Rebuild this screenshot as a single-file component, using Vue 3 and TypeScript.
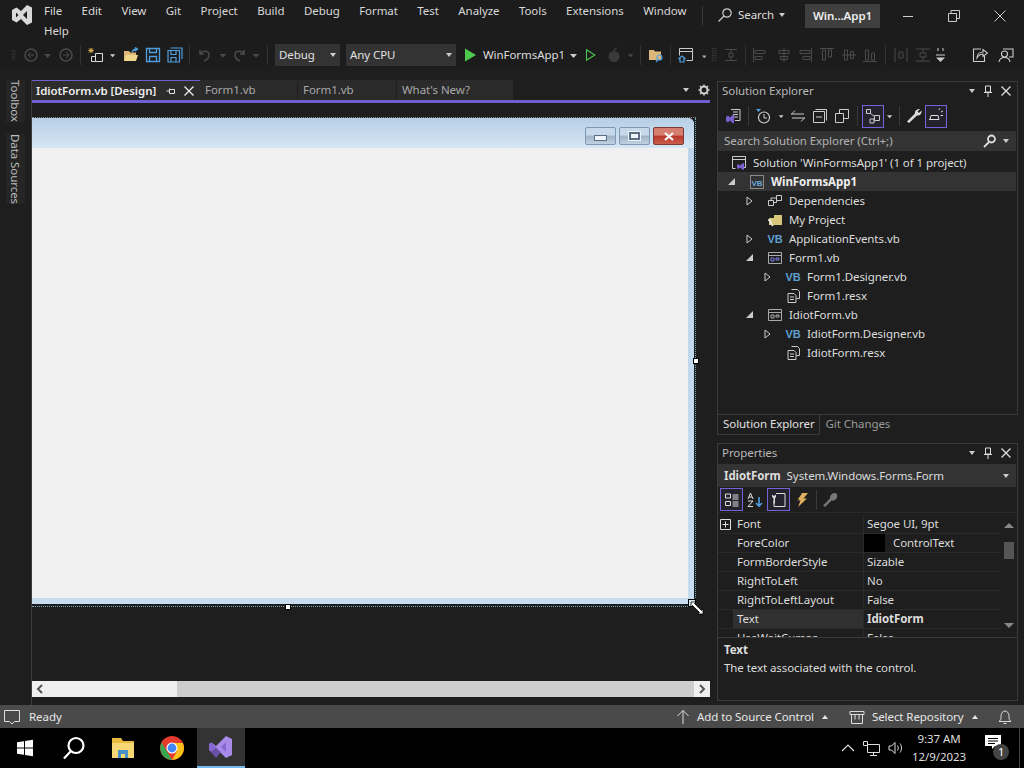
<template>
  <div class="ide">
    <header class="titlebar">
      <div class="logo">
        <svg width="24" height="24" viewBox="0 0 24 24"><path fill="#d8d8d8" d="M17 2l5 2.500v15L17 22l-6-6-4.500 3.500L2 17V7l4.500-2.500L11 8zM6 9.500v5l2.500-2.500zM17 8l-4 4 4 4z" /></svg>
      </div>
      <nav class="menu">
        <span v-for="m in menus" :key="m">{{ m }}</span>
      </nav>
      <div class="vsep"></div>
      <div class="search">
        <svg width="16" height="16" viewBox="0 0 16 16" fill="none" stroke="#ccc" stroke-width="1.2"><circle cx="10" cy="6" r="4.200" /><path d="M7 9l-5.500 5.500" /></svg>
        <span>Search</span>
        <i class="caret"></i>
      </div>
      <div class="project-name">Win...App1</div>
      <div class="win-btns">
        <svg width="12" height="12" viewBox="0 0 12 12" stroke="#ccc" fill="none"><path d="M1 6.500h10" /></svg>
        <svg width="12" height="12" viewBox="0 0 12 12" stroke="#ccc" fill="none"><path d="M.5 3.500h8v8h-8zM3 3.500V.5h8.500v8H8.500" /></svg>
        <svg width="12" height="12" viewBox="0 0 12 12" stroke="#ccc" fill="none"><path d="M.5.5l11 11M11.500.5l-11 11" /></svg>
      </div>
    </header>

    <div class="toolbar">
      <template v-for="(t, i) in toolItems" :key="i">
        <div v-if="t.combo" class="combo" :style="{ width: t.w + 'px' }"><span>{{ t.combo }}</span><i class="caret"></i></div>
        <div v-else-if="t.label" class="run-label" :style="{ width: t.w + 'px' }">{{ t.label }}</div>
        <div v-else-if="t.sep" class="tb-sep" :style="{ width: t.w + 'px' }"><b></b></div>
        <div v-else class="tb-icon" :style="{ width: t.w + 'px' }">
          <svg v-if="t.icon" width="16" height="16" viewBox="0 0 16 16" fill="none" v-html="icons[t.icon]"></svg>
        </div>
      </template>
    </div>

    <main class="main">
      <aside class="strip">
        <span>Toolbox</span>
        <span>Data Sources</span>
      </aside>

      <section class="doc">
        <div class="tabs">
          <div class="tab active">
            <span>IdiotForm.vb [Design]</span>
            <svg width="10" height="10" viewBox="0 0 10 10" fill="none" stroke="#ddd"><path d="M.5 5h3M3.500 2.500v5h5v-4h-5" /></svg>
            <svg width="10" height="10" viewBox="0 0 10 10" fill="none" stroke="#eee" stroke-width="1.300"><path d="M.5.5l9 9M9.500.5l-9 9" /></svg>
          </div>
          <div class="tab" style="width: 98px">Form1.vb</div>
          <div class="tab" style="width: 99px">Form1.vb</div>
          <div class="tab" style="width: 117px">What's New?</div>
          <div class="tab-tools">
            <i class="caret"></i>
            <svg width="12" height="12" viewBox="0 0 12 12"><circle cx="6" cy="6" r="3.500" fill="none" stroke="#ccc" stroke-width="2" /><path stroke="#ccc" stroke-width="1.500" d="M6 .5v2M6 9.500v2M.5 6h2M9.500 6h2M2 2l1.500 1.500M8.500 8.500L10 10M10 2L8.500 3.500M3.500 8.500L2 10" /></svg>
          </div>
        </div>
        <div class="canvas">
          <div class="form">
            <div class="form-title">
              <div class="cap-btn"><b class="min"></b></div>
              <div class="cap-btn"><b class="max"></b></div>
              <div class="cap-btn close">
                <svg width="12" height="9" viewBox="0 0 12 9" stroke="#fff" stroke-width="2.200"><path d="M2 1l8 7M10 1L2 8" /></svg>
              </div>
            </div>
            <div class="form-client"></div>
          </div>
          <div class="dots-top"></div>
          <div class="dots-right"></div>
          <div class="dots-bottom"></div>
          <div class="handle" style="left: 253px; top: 501px"></div>
          <div class="handle" style="left: 661px; top: 255px"></div>
          <div class="handle corner" style="left: 656px; top: 496px"></div>
          <svg class="cursor" width="14" height="14" viewBox="0 0 14 14">
            <path d="M1 1h5L4.500 2.500l7 7L13 8v5H8l1.500-1.500-7-7L1 6z" fill="#fff" stroke="#000" stroke-width=".8" />
          </svg>
        </div>
        <div class="hscroll">
          <span class="arrow">
            <svg width="8" height="10" viewBox="0 0 8 10" fill="none" stroke="#555" stroke-width="2"><path d="M6 1L2 5l4 4" /></svg>
          </span>
          <div class="track"><div class="thumb"></div></div>
          <span class="arrow right">
            <svg width="8" height="10" viewBox="0 0 8 10" fill="none" stroke="#555" stroke-width="2"><path d="M2 1l4 4-4 4" /></svg>
          </span>
        </div>
      </section>

      <div class="side">
        <section class="panel sol">
          <div class="panel-head">
            <span>Solution Explorer</span>
            <i class="caret"></i>
            <svg width="10" height="12" viewBox="0 0 10 12" fill="none" stroke="#ddd"><path d="M2.500 1h5v6h-5zM1 7.500h8M5 8v4" /></svg>
            <svg width="10" height="10" viewBox="0 0 10 10" fill="none" stroke="#ddd" stroke-width="1.300"><path d="M.5.5l9 9M9.500.5l-9 9" /></svg>
          </div>
          <div class="sol-tools">
            <div v-for="(t, i) in solTools" :key="i" :class="['sol-tool', { on: t.on, 'is-sep': t.sep }]" :style="{ width: t.w + 'px' }">
              <b v-if="t.sep"></b>
              <svg v-else width="16" height="16" viewBox="0 0 16 16" fill="none" v-html="icons[t.icon!]"></svg>
            </div>
          </div>
          <div class="sol-search">
            <span>Search Solution Explorer (Ctrl+;)</span>
            <svg width="14" height="14" viewBox="0 0 14 14" fill="none" stroke="#ddd" stroke-width="1.800"><circle cx="8.500" cy="5" r="3.500" /><path d="M6 8l-5 5" /></svg>
            <i class="caret"></i>
          </div>
          <div class="tree">
            <div v-for="r in treeRows" :key="r.label" :class="['row', { selected: r.bold }]">
              <div class="row-inner" :style="{ marginLeft: r.depth * 18 - 11 + 'px' }">
                <span class="expander">
                  <i v-if="r.open === true" class="tri-open"></i>
                  <svg v-else-if="r.open === false" width="7" height="10" viewBox="0 0 7 10" fill="none" stroke="#ccc"><path d="M1 1l5 4-5 4z" /></svg>
                </span>
                <span class="node-icon">
                  <span v-if="r.icon === 'vb'" class="vb-badge">VB</span>
                  <svg v-else width="16" height="16" viewBox="0 0 16 16" fill="none" v-html="icons[r.icon]"></svg>
                </span>
                <span>{{ r.label }}</span>
              </div>
            </div>
          </div>
        </section>
        <div class="side-tabs">
          <span class="on">Solution Explorer</span>
          <span>Git Changes</span>
        </div>

        <section class="panel props">
          <div class="panel-head">
            <span>Properties</span>
            <i class="caret"></i>
            <svg width="10" height="12" viewBox="0 0 10 12" fill="none" stroke="#ddd"><path d="M2.500 1h5v6h-5zM1 7.500h8M5 8v4" /></svg>
            <svg width="10" height="10" viewBox="0 0 10 10" fill="none" stroke="#ddd" stroke-width="1.300"><path d="M.5.5l9 9M9.500.5l-9 9" /></svg>
          </div>
          <div class="obj-select">
            <b>IdiotForm</b><span>System.Windows.Forms.Form</span>
            <i class="caret"></i>
          </div>
          <div class="prop-tools">
            <div v-for="(t, i) in propTools" :key="i" :class="['sol-tool', { on: t.on, 'is-sep': t.sep }]" :style="{ width: t.w + 'px' }">
              <b v-if="t.sep"></b>
              <svg v-else width="16" height="16" viewBox="0 0 16 16" fill="none" v-html="icons[t.icon!]"></svg>
            </div>
          </div>
          <div class="grid-wrap">
            <div class="prop-grid">
              <div v-for="p in propRows" :key="p.name" :class="['prop-row', { active: p.name === 'Text' }]">
                <span class="gutter">
                  <svg v-if="p.name === 'Font'" width="11" height="11" viewBox="0 0 11 11" fill="none" stroke="#ddd"><path d="M.5.5h10v10H.5zM5.500 2.500v6M2.500 5.500h6" /></svg>
                </span>
                <span class="prop-name">{{ p.name }}</span>
                <span :class="['prop-val', { strong: p.bold }]">
                  <i v-if="p.swatch" class="swatch"></i>{{ p.value }}
                </span>
              </div>
            </div>
            <div class="vscroll">
              <i class="up"></i>
              <b></b>
              <i class="down"></i>
            </div>
          </div>
          <div class="desc">
            <b>Text</b>
            <span>The text associated with the control.</span>
          </div>
        </section>
      </div>
    </main>

    <footer class="status">
      <svg width="18" height="16" viewBox="0 0 18 16" fill="none" stroke="#ddd"><path d="M1.500 1.500h15v11h-5l-2.500 2.500-2.500-2.500h-5z" /></svg>
      <span class="ready">Ready</span>
      <svg width="14" height="16" viewBox="0 0 14 16" fill="none" stroke="#ddd"><path d="M7 15V1.500M1.500 7L7 1.500 12.500 7" /></svg>
      <span class="st-item">Add to Source Control</span>
      <i class="caret up"></i>
      <svg class="repo" width="16" height="14" viewBox="0 0 16 14" fill="none" stroke="#ddd"><path d="M1 1.500h14v3H1zM2.500 4.500v9h11v-9M6 4.500v5M10 4.500v5" /></svg>
      <span class="st-item">Select Repository</span>
      <i class="caret up"></i>
      <svg class="bell" width="14" height="16" viewBox="0 0 14 16" fill="none" stroke="#ddd"><path d="M1 12.500c1.500-1 2-2 2-5 0-3 1.500-5.500 4-5.500s4 2.500 4 5.500c0 3 .5 4 2 5zM5.500 14.500h3" /></svg>
    </footer>

    <footer class="taskbar">
      <div class="task">
        <svg width="18" height="18" viewBox="0 0 18 18" fill="#fff"><path d="M1 3.200l7-1v6.300H1zM9 2l8-1.200v7.700H9zM1 9.500h7v6.300l-7-1zM9 9.500h8v7.700L9 16z" /></svg>
      </div>
      <div class="task">
        <svg width="24" height="24" viewBox="0 0 24 24" fill="none" stroke="#fff" stroke-width="2.200"><circle cx="14" cy="9.500" r="7.500" /><path d="M9 15l-7 7.500" /></svg>
      </div>
      <div class="task">
        <svg width="24" height="22" viewBox="0 0 24 22"><path fill="#e8b93f" d="M1 1h9l2 3h11v17H1z" /><path fill="#f7d774" d="M1 6h22v15H1z" /><path fill="#4a90c8" d="M7 13h10v8h-3v-4h-4v4H7z" /></svg>
      </div>
      <div class="task">
        <svg width="24" height="24" viewBox="0 0 24 24">
          <circle cx="12" cy="12" r="12" fill="#e33b2e" />
          <path fill="#36a852" d="M1.600 6.500 L7 15.500 L12 24 A12 12 0 0 1 1.600 6.500z" />
          <path fill="#fbc116" d="M12 7h10.900A12 12 0 0 1 12 24l5-9z" />
          <circle cx="12" cy="12" r="5.500" fill="#fff" />
          <circle cx="12" cy="12" r="4.400" fill="#4285f4" />
        </svg>
      </div>
      <div class="task current">
        <svg width="26" height="24" viewBox="0 0 26 24"><path fill="#a88be8" d="M18 1l6 3v16l-6 3-10-10-4.500 3.500L1 15V9l2.500-1.500L8 11z" /><path fill="#7c5cc9" d="M18 7l-5 5 5 5zM1 9l2.500-1.500L13 17l-5 6L1 15z" opacity=".75" /></svg>
      </div>
      <div class="tray">
        <svg width="14" height="8" viewBox="0 0 14 8" fill="none" stroke="#ddd" stroke-width="1.200"><path d="M1 7l6-6 6 6" /></svg>
        <svg width="17" height="15" viewBox="0 0 17 15" fill="none" stroke="#ddd"><path d="M4.500 3.500h12v8h-12zM10.500 11.500v3M7 14.500h7M.5.500h4v4h-4z" /></svg>
        <svg width="16" height="14" viewBox="0 0 16 14" fill="none" stroke="#ddd"><path d="M1 5h2.500L7 1.500v11L3.500 9H1zM9.500 4.500c1 1.500 1 3.500 0 5M12 2.500c2 3 2 6 0 9" /></svg>
        <div class="clock"><span>9:37 AM</span><span>12/9/2023</span></div>
        <div class="notif">
          <svg width="16" height="15" viewBox="0 0 16 15"><path fill="#fff" d="M0 0h16v11h-6l-3 3v-3H0z" /><path stroke="#000" d="M3 3.500h10M3 6h10M3 8.500h7" /></svg>
          <span>1</span>
        </div>
      </div>
    </footer>
  </div>
</template>

<script setup lang="ts">
interface ToolItem {
  w: number
  icon?: string
  combo?: string
  label?: string
  sep?: boolean
  on?: boolean
}

const menus = [
  'File', 'Edit', 'View', 'Git', 'Project', 'Build', 'Debug', 'Format',
  'Test', 'Analyze', 'Tools', 'Extensions', 'Window', 'Help',
]

const dim = '#4a4a4a'
const icons: Record<string, string> = {
  grip: `<path stroke="${dim}" stroke-dasharray="1 1" d="M4 1v14M6 1v14M8 1v14"/>`,
  back: `<circle cx="8" cy="8" r="6" stroke="${dim}" stroke-width="1.500"/><path stroke="${dim}" d="M11 8H5M8 5L5 8l3 3"/>`,
  fwd: `<circle cx="8" cy="8" r="6" stroke="${dim}" stroke-width="1.500"/><path stroke="${dim}" d="M5 8h6M8 5l3 3-3 3"/>`,
  caretDim: `<path fill="${dim}" d="M4 7h7l-3.500 4z"/>`,
  caret: `<path fill="#ccc" d="M4 7h7l-3.500 4z"/>`,
  newProj: `<path stroke="#ddd" d="M7.500 6.500h7v8h-7zM3.500 9.500v5h4M7 9.500H3.500"/><path stroke="#e6b84a" d="M3 1v5M.5 3.500h5M1 1.500l4 4M5 1.500l-4 4"/>`,
  open: `<path fill="#dcb67a" d="M1 4h5l1 1.500h6V14H1z"/><path fill="#f0d68a" d="M3 8h12l-2 6H1z"/><path stroke="#4f9fe0" stroke-width="1.300" d="M9 5c1-2 2.500-3 5-3M12 .5L14.500 2 12 4"/>`,
  save: `<path stroke="#4f9fe0" stroke-width="1.300" d="M1.500 1.500h13v13h-13zM4.500 1.500v4h7v-4M4.500 14.500v-5h7v5"/>`,
  saveAll: `<path stroke="#4f9fe0" stroke-width="1.200" d="M3.500 1h11.500v11M1 3.500h11.500v11.500H1zM4 3.500v4h5v-4M4 15v-4.500h5V15"/>`,
  undo: `<path stroke="${dim}" stroke-width="1.600" d="M4 3v4h4M4.500 6.500C6 3.500 13 3 13 8c0 3-2.500 5-5 6"/>`,
  redo: `<path stroke="${dim}" stroke-width="1.600" d="M12 3v4H8M11.500 6.500C10 3.500 3 3 3 8c0 3 2.500 5 5 6"/>`,
  play: `<path fill="#4ec94e" d="M3 1.500l11 6.500-11 6.500z"/>`,
  playOutline: `<path stroke="#4ec94e" stroke-width="1.200" d="M4 2l9.500 6-9.500 6z"/>`,
  attach: `<circle cx="8" cy="9.500" r="5.500" fill="#3a3a3a"/><path stroke="#3a3a3a" stroke-width="1.500" d="M8 4c0-1.500 1-2.500 3-3"/>`,
  folderFind: `<path fill="#dcb67a" d="M1 3h5l1 1.500h6V13H1z"/><circle cx="11.500" cy="10.500" r="2.500" stroke="#4f9fe0" stroke-width="1.200"/><path stroke="#4f9fe0" stroke-width="1.300" d="M10 12.500L8 15"/>`,
  winHome: `<path stroke="#ccc" d="M1.500 1.500h13v12h-6M1.500 1.500v7M1.500 4.500h13"/><path stroke="#4f9fe0" stroke-width="1.200" d="M.5 12l3.500-3 3.500 3M2 11v4h4v-4"/>`,
  barsCaret: `<path stroke="#ccc" d="M3 9h9"/><path fill="#ccc" d="M3 11h9l-4.500 4z"/>`,
  gripDim: `<path stroke="${dim}" stroke-dasharray="1 1" d="M5 0v16M7 0v16M9 0v16"/>`,
  sizeH: `<path stroke="${dim}" d="M2 2.500h12M2 13.500h12M6 6h4v4H6zM8 3v3M8 10v3"/>`,
  alignL: `<path stroke="${dim}" d="M1.500 1v14M3 3.500h10v3H3zM3 9.500h7v3H3z"/>`,
  alignC: `<path stroke="${dim}" d="M8 1v14M3 3.500h10v3H3zM4.500 9.500h7v3h-7z"/>`,
  alignR: `<path stroke="${dim}" d="M14.500 1v14M3 3.500h10v3H3zM6 9.500h7v3H6z"/>`,
  alignT: `<path stroke="${dim}" d="M1 1.500h14M3.500 3v10h3V3zM9.500 3v7h3V3z"/>`,
  alignM: `<path stroke="${dim}" d="M1 8h14M3.500 3v10h3V3zM9.500 4.500v7h3v-7z"/>`,
  alignB: `<path stroke="${dim}" d="M1 14.500h14M3.500 3v10h3V3zM9.500 6v7h3V6z"/>`,
  spaceH: `<path stroke="${dim}" d="M2 1v14M14 1v14M6 5h4v6H6z"/>`,
  spaceV: `<path stroke="${dim}" d="M1 2h14M1 14h14M5 6h6v4H5zM8 2v4M8 10v4"/>`,
  moreDots: `<path stroke="#ccc" d="M5 1v3M10 1v3M3 8h9"/><path fill="#ccc" d="M3 10.500h9L7.500 15z"/>`,
  share: `<path stroke="#ccc" stroke-width="1.100" d="M9 2h-7.500v12.500h11V9"/><path stroke="#ccc" stroke-width="1.100" d="M5 11c0-4 3-6 6-6V2.500L15.500 6 11 9.500V7c-2.500 0-4.500 1.500-6 4z"/>`,
  feedback: `<path stroke="#ccc" stroke-width="1.100" d="M5 2h10v8H11"/><circle cx="6.500" cy="7" r="3" stroke="#ccc" stroke-width="1.100"/><path stroke="#ccc" stroke-width="1.100" d="M1 15c.5-3 3-4.500 5.500-4.500S11.500 12 12 15"/>`,
  syncDoc: `<path stroke="#ccc" d="M6 1.500h9v11H10"/><path stroke="#ccc" d="M8 4h5M8 6.500h5M8 9h5"/><path fill="#7a5fd0" d="M1 9l2-1.500 2 2 3-3 1 .5v8l-1 .5-3-3-2 2-2-1.500z"/>`,
  history: `<circle cx="9" cy="9.500" r="5.500" stroke="#ccc" stroke-width="1.200"/><path stroke="#ccc" d="M9 6v4h3"/><path fill="#4f9fe0" d="M1 1h5L3.500 4z"/>`,
  sync: `<path stroke="#ccc" d="M1 6h13M5 2.500L1.500 6M2 10h13M11 13.500l3.500-3.500"/>`,
  collapse: `<path stroke="#ccc" d="M1.500 3.500h11v11h-11zM4 9h6M3.500 1.500h11v11"/>`,
  copyDoc: `<path stroke="#ccc" d="M1.500 5.500h8v9h-8zM5.500 5.500v-4h9v9h-5"/>`,
  network: `<path stroke="#ccc" d="M1.500 1.500h4v4h-4zM5.500 5.500l4 3M9.500 7.500h5v5h-5zM5 11h4v4H5z"/>`,
  wrench: `<path fill="#ddd" d="M1 13.500L9 5.500c-.5-2 1-4.500 5-4.500l-2.500 2.500 1.500 1.500L15.500 2.500c.5 4-2.500 5.500-4.500 5L3 15z"/>`,
  pending: `<path stroke="#ddd" d="M1 11.500h10M2 11.500l1-4h7l1 4M13 4l2-1M12.500 7.500H15M11 2l.5-1.500"/>`,
  solution: `<path stroke="#ccc" d="M1.500 1.500h13v11h-4M1.500 1.500v12h3M1.500 4.500h13"/><path fill="#7a5fd0" d="M6 10l1.500-1 1.500 1.500L12 8l1 .5v6l-1 .5-3-2.500-1.500 1.500L6 13z"/>`,
  project: `<rect x="1.500" y="1.500" width="13" height="13" stroke="#8a8a8a"/><text x="8" y="11.500" text-anchor="middle" font-size="8" font-family="Liberation Sans" fill="#6aa9dc">VB</text>`,
  deps: `<path stroke="#ccc" d="M1.500 7.500h5v5h-5zM9.500 2.500h5v5h-5zM6.500 9.500h3V5M4 7.500V5h5.500"/>`,
  myProject: `<path fill="#d8c778" d="M2 3h13v10H2z"/><path fill="#1f1f1f" d="M2 3h5v3H2z"/><path stroke="#eee" stroke-width="1.500" d="M1 8c2 0 3 1 3 2.500M3 10l3 4"/>`,
  form: `<path stroke="#aaa" d="M1.500 2.500h13v11h-13zM1.500 5.500h13"/><path stroke="#7a7adc" d="M4 8h3v3H4zM9 8h3v2H9z"/>`,
  formGray: `<path stroke="#aaa" d="M1.500 2.500h13v11h-13zM1.500 5.500h13M4 8h3v3H4zM9 8h3v2H9z"/>`,
  resx: `<path stroke="#ccc" d="M6.500 1.500h6l2 2v7h-3M3 5.500h6l2 2v7H3zM5 9h4M5 11.500h4"/>`,
  categorized: `<path stroke="#ddd" d="M1.500 2h5v4h-5zM1.500 9.500h5v4h-5zM8.500 3h6M8.500 5h6M8.500 7h6M8.500 10h6M8.500 12h6M8.500 14h6"/>`,
  alpha: `<path stroke="#ddd" d="M1 7l2.500-6L6 7M2 5h3M1 9h5l-5 5.500h5"/><path stroke="#4f9fe0" stroke-width="1.600" d="M12 5v9M9 11l3 3 3-3"/>`,
  propPage: `<path stroke="#ddd" d="M5 1.500h9v13H3V9"/><path fill="#ddd" d="M1 2.500l2 1.500 2-1.500c.5 2-.5 3.500-1 4v5H2.500v-5c-.5-.5-2-2-1.500-4z"/>`,
  bolt: `<path fill="#e0b060" d="M9 1h6l-4.500 5.500H14L5 15l2.500-6.500H4z"/><path stroke="#1f1f1f" d="M4 7l4-5M3 11l3-4"/>`,
  wrenchDim: `<path fill="#777" d="M1 13.500L8 6.500c-.5-3 2-5.500 5-5.500 2 0 2.500 2 2 4.500-1 2.500-3 3.500-5.500 3L3 15z"/>`,
}

// widths are the gaps between icon centres measured on the toolbar
const toolItems: ToolItem[] = [
  { w: 9 }, { icon: 'grip', w: 12 }, { icon: 'back', w: 19 }, { icon: 'caretDim', w: 16 }, { icon: 'fwd', w: 19 },
  { sep: true, w: 10 }, { icon: 'newProj', w: 22 }, { icon: 'caret', w: 12 }, { icon: 'open', w: 23 },
  { icon: 'save', w: 22 }, { icon: 'saveAll', w: 22 }, { sep: true, w: 6 }, { icon: 'undo', w: 24 },
  { icon: 'caretDim', w: 15 }, { icon: 'redo', w: 18 }, { icon: 'caretDim', w: 15 }, { sep: true, w: 6 }, { w: 5 },
  { combo: 'Debug', w: 65 }, { w: 6 }, { combo: 'Any CPU', w: 110 }, { w: 6 },
  { icon: 'play', w: 16 }, { label: 'WinFormsApp1', w: 87 }, { icon: 'caret', w: 18 }, { icon: 'playOutline', w: 14 },
  { w: 6 }, { icon: 'attach', w: 22 }, { icon: 'caretDim', w: 12 }, { sep: true, w: 6 }, { icon: 'folderFind', w: 26 },
  { sep: true, w: 2 }, { icon: 'winHome', w: 30 }, { icon: 'barsCaret', w: 7 }, { icon: 'gripDim', w: 14 },
  { icon: 'sizeH', w: 18 }, { sep: true, w: 10 }, { icon: 'alignL', w: 20 }, { icon: 'alignC', w: 27 }, { icon: 'alignR', w: 16 },
  { icon: 'alignT', w: 28 }, { icon: 'alignM', w: 16 }, { icon: 'alignB', w: 26 }, { sep: true, w: 4 },
  { icon: 'spaceH', w: 28 }, { icon: 'spaceV', w: 16 }, { icon: 'moreDots', w: 20 }, { w: 17 },
  { icon: 'share', w: 24 }, { icon: 'feedback', w: 28 },
]

const solTools: ToolItem[] = [
  { icon: 'syncDoc', w: 26 }, { sep: true, w: 4 }, { icon: 'history', w: 26 }, { icon: 'caret', w: 11 },
  { icon: 'sync', w: 22 }, { icon: 'collapse', w: 22 }, { icon: 'copyDoc', w: 22 }, { sep: true, w: 9 },
  { icon: 'network', w: 22, on: true }, { icon: 'caret', w: 12 }, { sep: true, w: 7 },
  { icon: 'wrench', w: 22 }, { icon: 'pending', w: 22, on: true },
]

const propTools: ToolItem[] = [
  { icon: 'categorized', w: 23, on: true }, { icon: 'alpha', w: 24 }, { icon: 'propPage', w: 23, on: true },
  { icon: 'bolt', w: 22 }, { sep: true, w: 8 }, { icon: 'wrenchDim', w: 20 },
]

const treeRows = [
  { depth: 0, label: "Solution 'WinFormsApp1' (1 of 1 project)", icon: 'solution' },
  { depth: 1, label: 'WinFormsApp1', icon: 'project', open: true, bold: true },
  { depth: 2, label: 'Dependencies', icon: 'deps', open: false },
  { depth: 2, label: 'My Project', icon: 'myProject' },
  { depth: 2, label: 'ApplicationEvents.vb', icon: 'vb', open: false },
  { depth: 2, label: 'Form1.vb', icon: 'form', open: true },
  { depth: 3, label: 'Form1.Designer.vb', icon: 'vb', open: false },
  { depth: 3, label: 'Form1.resx', icon: 'resx' },
  { depth: 2, label: 'IdiotForm.vb', icon: 'formGray', open: true },
  { depth: 3, label: 'IdiotForm.Designer.vb', icon: 'vb', open: false },
  { depth: 3, label: 'IdiotForm.resx', icon: 'resx' },
]

const propRows = [
  { name: 'Font', value: 'Segoe UI, 9pt' },
  { name: 'ForeColor', value: 'ControlText', swatch: true },
  { name: 'FormBorderStyle', value: 'Sizable' },
  { name: 'RightToLeft', value: 'No' },
  { name: 'RightToLeftLayout', value: 'False' },
  { name: 'Text', value: 'IdiotForm', bold: true },
  { name: 'UseWaitCursor', value: 'False' },
]
</script>

<style>
html,
body {
  margin: 0;
  background: #1f1f1f;
  overflow: hidden;
}
</style>

<style scoped>
.ide {
  width: 1024px;
  height: 768px;
  display: flex;
  flex-direction: column;
  background: #1e1e1e;
  color: #dcdcdc;
  font-family: "Noto Sans", "Liberation Sans", sans-serif;
  font-size: 11.5px;
  letter-spacing: -0.07px;
  line-height: 16px;
  overflow: hidden;
}

i {
  font-style: normal;
}

.caret {
  display: inline-block;
  width: 0;
  height: 0;
  border-left: 3.500px solid transparent;
  border-right: 3.500px solid transparent;
  border-top: 4px solid #ccc;
}

.caret.up {
  border-top: 0;
  border-bottom: 4px solid #e6e6e6;
}

.titlebar {
  height: 43px;
  display: flex;
  flex: none;
  background: #1c1c1c;
}

.logo {
  width: 44px;
  height: 30px;
  flex: none;
  display: flex;
  align-items: center;
  justify-content: center;
}

.menu {
  width: 660px;
  flex: none;
  display: flex;
  flex-wrap: wrap;
  column-gap: 19.500px;
  align-content: flex-start;
  padding-top: 2px;
  color: #d8d8d8;
}

.menu span {
  height: 20px;
  line-height: 18px;
}

.vsep {
  width: 1px;
  height: 19px;
  margin: 6px 0 0 -2px;
  background: #3a3a3a;
}

.search {
  display: flex;
  align-items: center;
  gap: 5px;
  height: 30px;
  margin-left: 14px;
  width: 88px;
  flex: none;
}

.project-name {
  width: 75px;
  height: 24px;
  margin-top: 4px;
  flex: none;
  background: #3f3f3f;
  color: #eee;
  font-weight: 600;
  text-align: center;
  line-height: 24px;
}

.win-btns {
  display: flex;
  align-items: center;
  height: 32px;
  gap: 34px;
  margin-left: 22px;
}

.toolbar {
  height: 24px;
  flex: none;
  display: flex;
  align-items: center;
  background: #1c1c1c;
}

.tb-icon {
  display: flex;
  justify-content: center;
  flex: none;
}

.tb-sep {
  display: flex;
  justify-content: center;
  flex: none;
}

.tb-sep b {
  width: 1px;
  height: 20px;
  background: #333;
}

.combo {
  height: 22px;
  flex: none;
  background: #333;
  display: flex;
  align-items: center;
  justify-content: space-between;
  padding: 0 4px;
  box-sizing: border-box;
  color: #e0e0e0;
}

.run-label {
  flex: none;
  padding-left: 5px;
  box-sizing: border-box;
  white-space: nowrap;
}

.main {
  height: 625px;
  margin-top: 13px;
  flex: none;
  display: flex;
}

.strip {
  width: 31px;
  flex: none;
  display: flex;
  flex-direction: column;
  gap: 12px;
  align-items: center;
  box-sizing: border-box;
  color: #bbb;
}

.strip span {
  writing-mode: vertical-rl;
  width: 19px;
  line-height: 19px;
  background: #252525;
}

.doc {
  width: 679px;
  flex: none;
  display: flex;
  flex-direction: column;
  border-left: 1px solid #3d3d3d;
  box-sizing: border-box;
}

.tabs {
  height: 23px;
  flex: none;
  display: flex;
  border-bottom: 3px solid #6f5fd0;
  box-sizing: border-box;
}

.tab {
  height: 20px;
  flex: none;
  background: #2a2a2a;
  color: #a8a8a8;
  padding-left: 5px;
  line-height: 19px;
  box-sizing: border-box;
  border-right: 1px solid #1e1e1e;
}

.tab.active {
  width: 168px;
  display: flex;
  align-items: center;
  gap: 8px;
  padding-left: 4px;
  background: #2c2c2c;
  color: #eee;
  font-weight: 600;
  border-top: 1px solid #6f5fd0;
  border-right: 0;
  white-space: nowrap;
}

.tab.active span {
  width: 122px;
}

.tab-tools {
  margin-left: auto;
  display: flex;
  align-items: center;
  gap: 9px;
  padding-right: 0;
  height: 20px;
}

.canvas {
  flex: 1;
  position: relative;
  overflow: hidden;
  background: #1e1e1e;
}

.form {
  position: absolute;
  left: 0;
  top: 15px;
  width: 662px;
  height: 486px;
  display: flex;
  flex-direction: column;
  background: linear-gradient(#bcd4ea, #c8dcf0);
  border-radius: 0 6px 0 0;
  padding-right: 6px;
  padding-bottom: 6px;
  box-sizing: border-box;
}

.form-title {
  height: 30px;
  flex: none;
  display: flex;
  justify-content: flex-end;
  gap: 3px;
  padding: 9px 4px 0 0;
  box-sizing: border-box;
  background: linear-gradient(#b6cfe6, #d6e6f4);
  margin-right: -6px;
  padding-right: 10px;
  border-radius: 0 6px 0 0;
}

.cap-btn {
  width: 31px;
  height: 18px;
  border: 1px solid #7f99b4;
  border-radius: 2px;
  box-sizing: border-box;
  background: linear-gradient(#c6d8ea 45%, #9fb3c6 50%, #c0d2e2);
  display: flex;
  align-items: center;
  justify-content: center;
}

.cap-btn.close {
  background: linear-gradient(#d67e70 45%, #b8382a 50%, #c95c4c);
  border-color: #7d3a36;
}

.cap-btn .min {
  width: 11px;
  height: 4px;
  background: #eef4fa;
  border: 1px solid #5a6f85;
  margin-top: 4px;
}

.cap-btn .max {
  width: 11px;
  height: 8px;
  box-sizing: border-box;
  background: #eef4fa;
  border: 2px solid #5a6f85;
  outline: 1px solid #eef4fa;
}

.form-client {
  flex: 1;
  background: #f0f0f0;
}

.dots-top {
  position: absolute;
  left: 0;
  top: 14px;
  width: 664px;
  border-top: 1px dotted #888;
}

.dots-right {
  position: absolute;
  left: 663px;
  top: 15px;
  height: 488px;
  border-left: 1px dotted #7ab;
}

.dots-bottom {
  position: absolute;
  left: 0;
  top: 503px;
  width: 664px;
  border-top: 1px dotted #7ab;
}

.handle {
  position: absolute;
  width: 6px;
  height: 6px;
  background: #fff;
  border: 1px solid #000;
  box-sizing: border-box;
}

.handle.corner {
  width: 8px;
  height: 8px;
  background: #d8e8f4;
}

.cursor {
  position: absolute;
  left: 658px;
  top: 498px;
}

.hscroll {
  height: 16px;
  flex: none;
  display: flex;
  background: #efefef;
  margin-bottom: 8px;
}

.arrow {
  width: 16px;
  flex: none;
  display: flex;
  align-items: center;
  justify-content: center;
}

.track {
  flex: 1;
  display: flex;
  justify-content: flex-end;
}

.thumb {
  width: 517px;
  background: #cdcdcd;
}

.side {
  width: 301px;
  margin-left: 7px;
  flex: none;
  display: flex;
  flex-direction: column;
}

.panel {
  border: 1px solid #3a3a3a;
  box-sizing: border-box;
}

.panel.sol {
  height: 334px;
  margin-top: 1px;
  flex: none;
  display: flex;
  flex-direction: column;
}

.panel-head {
  height: 18px;
  flex: none;
  display: flex;
  align-items: center;
  gap: 8px;
  padding: 0 6px 0 4px;
  color: #b8b8b8;
}

.panel-head span {
  flex: 1;
}

.sol-tools,
.prop-tools {
  display: flex;
  align-items: center;
  height: 26px;
  flex: none;
  padding-left: 2px;
}

.sol-tools {
  margin-top: 3px;
}

.sol-tool {
  display: flex;
  align-items: center;
  justify-content: center;
  height: 23px;
  box-sizing: border-box;
  flex: none;
}

.sol-tool.is-sep b {
  width: 1px;
  height: 20px;
  background: #3a3a3a;
}

.sol-tool.on {
  border: 1px solid #7264d6;
  background: #23222d;
}

.sol-search {
  height: 20px;
  margin: 2px 1px 0 0;
  flex: none;
  display: flex;
  align-items: center;
  gap: 6px;
  background: #333;
  padding: 0 7px 0 6px;
  color: #b4b4b4;
}

.sol-search span {
  flex: 1;
}

.tree {
  flex: 1;
  padding-top: 2px;
}

.row {
  height: 19px;
  white-space: nowrap;
  overflow: hidden;
}

.row.selected {
  background: #333;
  font-weight: 700;
  color: #eee;
  margin-right: 1px;
}

.row-inner {
  display: flex;
  align-items: center;
  height: 19px;
}

.expander {
  width: 12px;
  flex: none;
  display: flex;
  justify-content: center;
}

.tri-open {
  width: 0;
  height: 0;
  border-left: 7px solid transparent;
  border-bottom: 7px solid #ccc;
}

.node-icon {
  width: 20px;
  margin-left: 10px;
  margin-right: 4px;
  flex: none;
  display: flex;
  justify-content: center;
}

.vb-badge {
  color: #5f9fd0;
  font-weight: 700;
  font-size: 11px;
  font-family: "Liberation Sans", sans-serif;
}

.side-tabs {
  height: 20px;
  flex: none;
  display: flex;
  color: #9a9a9a;
  margin-bottom: 8px;
}

.side-tabs span {
  padding: 0 5px;
  line-height: 18px;
}

.side-tabs .on {
  color: #e0e0e0;
  border: 1px solid #3a3a3a;
  border-top: 0;
  padding: 0 4px 0 5px;
  margin-right: 1px;
}

.panel.props {
  height: 258px;
  flex: none;
  display: flex;
  flex-direction: column;
}

.obj-select {
  height: 23px;
  margin: 2px 1px 0 0;
  flex: none;
  display: flex;
  align-items: center;
  gap: 6px;
  background: #333;
  padding: 0 7px 0 6px;
  white-space: nowrap;
}

.obj-select span {
  flex: 1;
}

.prop-tools {
  height: 25px;
  padding-left: 2px;
  border-bottom: 1px solid #2a2a2a;
}

.grid-wrap {
  height: 122px;
  flex: none;
  display: flex;
  overflow: hidden;
  margin-top: 2px;
  border-bottom: 1px solid #3a3a3a;
}

.prop-grid {
  width: 283px;
  flex: none;
}

.prop-row {
  height: 19px;
  display: flex;
  align-items: center;
  border-bottom: 1px solid #2a2a2a;
  box-sizing: border-box;
  white-space: nowrap;
}

.gutter {
  width: 15px;
  flex: none;
  display: flex;
  justify-content: center;
}

.prop-name {
  width: 131px;
  height: 18px;
  line-height: 18px;
  flex: none;
  padding-left: 4px;
  box-sizing: border-box;
  border-right: 1px solid #2a2a2a;
}

.prop-row.active .prop-name {
  background: #303030;
}

.prop-val {
  padding-left: 3px;
  display: flex;
  align-items: center;
}

.prop-val.strong {
  font-weight: 700;
}

.swatch {
  width: 21px;
  height: 18px;
  background: #000;
  margin: 0 8px 0 -3px;
}

.vscroll {
  flex: 1;
  display: flex;
  flex-direction: column;
  align-items: center;
  position: relative;
  padding-top: 8px;
}

.vscroll .up {
  border-left: 5px solid transparent;
  border-right: 5px solid transparent;
  border-bottom: 5px solid #888;
}

.vscroll b {
  width: 10px;
  height: 17px;
  background: #555;
  margin-top: 14px;
}

.vscroll .down {
  position: absolute;
  top: 108px;
  border-left: 5px solid transparent;
  border-right: 5px solid transparent;
  border-top: 5px solid #888;
}

.desc {
  flex: 1;
  display: flex;
  flex-direction: column;
  padding: 4px 6px;
  gap: 2px;
}

.desc b {
  font-weight: 700;
}

.status {
  height: 23px;
  flex: none;
  display: flex;
  align-items: center;
  background: #4a4a4a;
  padding-left: 3px;
  color: #e6e6e6;
}

.ready {
  margin-left: 8px;
  width: 647px;
}

.st-item {
  margin: 0 8px 0 7px;
  white-space: nowrap;
}

.repo {
  margin-left: 21px;
}

.bell {
  margin-left: auto;
  margin-right: 12px;
}

.taskbar {
  height: 40px;
  flex: none;
  display: flex;
  background: #000;
}

.task {
  width: 49.250px;
  flex: none;
  display: flex;
  align-items: center;
  justify-content: center;
  box-sizing: border-box;
}

.task.current {
  width: 48px;
  background: #333;
  border-bottom: 2px solid #76b9ed;
}

.tray {
  margin-left: auto;
  display: flex;
  align-items: center;
  gap: 8px;
  padding-right: 4px;
  border-right: 1px solid #444;
  margin-right: 4px;
  color: #ddd;
}

.clock {
  display: flex;
  flex-direction: column;
  align-items: center;
  width: 60px;
  margin-left: -3px;
  line-height: 18px;
  white-space: nowrap;
}

.notif {
  position: relative;
  width: 38px;
  height: 30px;
  display: flex;
  padding-left: 8px;
  padding-top: 2px;
  box-sizing: border-box;
}

.notif span {
  position: absolute;
  left: 16px;
  top: 11px;
  width: 16px;
  height: 16px;
  border-radius: 50%;
  background: #444;
  font-size: 11px;
  text-align: center;
  color: #fff;
}
</style>
